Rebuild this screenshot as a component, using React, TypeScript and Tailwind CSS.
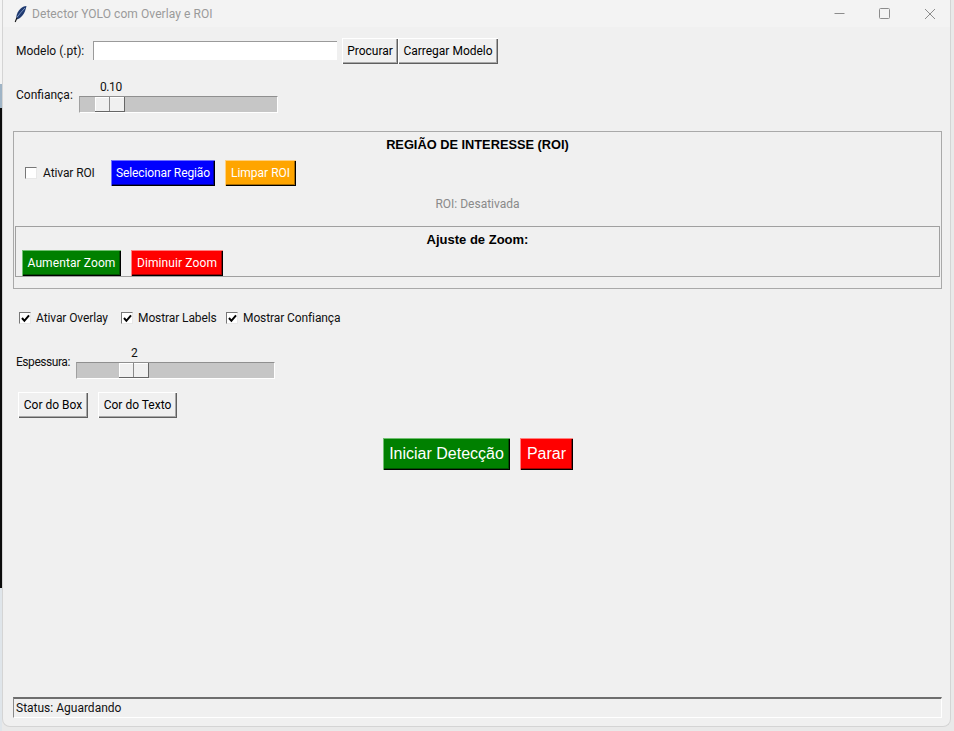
const raised = "shadow-[inset_1px_1px_0_#ffffff,inset_-1px_-1px_0_#5f5f5f,inset_-2px_-2px_0_#a8a8a8]";
const font = "font-['Roboto',sans-serif]";

function TkButton({ label, className = "" }: { label: string; className?: string }) {
  return (
    <button className={`flex h-[26px] items-center justify-center bg-[#f0f0f0] text-[12px] text-black ${raised} ${className}`}>
      {label}
    </button>
  );
}

function ColorButton({ label, className }: { label: string; className: string }) {
  return (
    <button className={`flex items-center justify-center text-white ${className}`}>
      {label}
    </button>
  );
}

function Check({ label, checked, className = "", labelClass = "ml-[6px]" }: { label: string; checked: boolean; className?: string; labelClass?: string }) {
  return (
    <div className={`flex items-center ${className}`}>
      <span className="flex h-[12px] w-[12px] items-center justify-center border border-t-[#777] border-l-[#777] border-r-[#e8e8e8] border-b-[#e8e8e8] bg-white">
        {checked && (
          <svg width="9" height="9" viewBox="0 0 9 9">
            <path d="M1 4 L3.4 6.8 L8 1.4" fill="none" stroke="#000" strokeWidth="2" />
          </svg>
        )}
      </span>
      <span className={`text-[12px] leading-none tracking-[-0.1px] text-[#111] ${labelClass}`}>{label}</span>
    </div>
  );
}

function Slider({ value, thumbOffset, valueOffset }: { value: string; thumbOffset: string; valueOffset: string }) {
  return (
    <div className="w-[199px]">
      <div className={`h-[18px] text-[12px] leading-[18px] tracking-[-0.4px] text-[#111] ${valueOffset}`}>{value}</div>
      <div className="h-[17px] border border-t-[#8f8f8f] border-l-[#a0a0a0] border-r-white border-b-white bg-[#c6c6c6]">
        <div className={`flex h-[15px] w-[30px] border-r border-b border-r-[#666] border-b-[#666] bg-[#f0f0f0] shadow-[inset_1px_1px_0_#ffffff] ${thumbOffset}`}>
          <div className="w-[15px] border-r border-[#8a8a8a]" />
        </div>
      </div>
    </div>
  );
}

export default function App() {
  return (
    <div className={`flex h-[731px] w-[954px] overflow-hidden bg-[#e9e9e9] ${font}`}>
      <div className="flex w-[2px] flex-col">
        <div className="h-[84px] bg-[#f4f4f4]" />
        <div className="h-[24px] bg-[#9fb4c6]" />
        <div className="h-[480px] bg-[#0c0c0c]" />
        <div className="flex-1 bg-[#dfe5ea]" />
      </div>
      <div className="flex h-[727px] w-[949px] flex-col rounded-b-[8px] border-l border-r border-b border-[#d4d4d4] bg-[#f0f0f0]">
        {/* title bar */}
        <div className="flex h-[27px] shrink-0 items-center bg-[#f3f3f3] pl-[11px] pr-[14px]">
          <svg width="14" height="18" viewBox="0 0 14 18">
            <path d="M12.5 1 C8 1 3.5 5.5 2.3 11.5 L2.6 14.5 C6.5 14 11 9 12.5 1 Z" fill="#1f3a70" />
            <path d="M11 3 C8 6 5 9.5 2.4 13" stroke="#8fa9d6" strokeWidth="0.8" fill="none" />
            <path d="M3 12.5 L1.2 17" stroke="#111" strokeWidth="1.1" fill="none" />
          </svg>
          <span className="ml-[4px] text-[12px] tracking-[0.07px] text-[#9a9a9a]">Detector YOLO com Overlay e ROI</span>
          <div className="ml-auto flex items-center gap-[34px]">
            <svg width="11" height="11" viewBox="0 0 11 11"><path d="M0.5 5.5 H10.5" stroke="#8c8c8c" strokeWidth="1" /></svg>
            <svg width="11" height="11" viewBox="0 0 11 11"><rect x="0.5" y="0.5" width="10" height="10" rx="1" fill="none" stroke="#8c8c8c" strokeWidth="1" /></svg>
            <svg width="12" height="12" viewBox="0 0 12 12"><path d="M1 1 L11 11 M11 1 L1 11" stroke="#8c8c8c" strokeWidth="1" /></svg>
          </div>
        </div>

        {/* model row */}
        <div className="mt-[11px] flex items-start pl-[13px]">
          <span className="mt-[7px] w-[77px] text-[12px] leading-none text-[#111]">Modelo (.pt):</span>
          <div className="mt-[3px] h-[19px] w-[244px] border-t border-l border-t-[#9a9a9a] border-l-[#9a9a9a] bg-white" />
          <TkButton label="Procurar" className="ml-[5px] w-[56px]" />
          <TkButton label="Carregar Modelo" className="w-[100px]" />
        </div>

        {/* confidence row */}
        <div className="mt-[14px] flex pl-[13px]">
          <span className="mt-[11px] w-[63px] text-[12px] leading-none text-[#111]">Confiança:</span>
          <Slider value="0.10" thumbOffset="ml-[15px]" valueOffset="pl-[21px]" />
        </div>

        {/* ROI frame */}
        <div className="mx-[10px] mt-[18px] h-[158px] w-[929px] border border-[#a9a9a9] px-[1px]">
          <div className="mt-[3px] text-center font-['Liberation_Sans',sans-serif] text-[12.8px] leading-[20px] font-bold text-black">REGIÃO DE INTERESSE (ROI)</div>
          <div className="mt-[5px] flex items-center pl-[10px]">
            <Check label="Ativar ROI" checked={false} className="w-[86px]" />
            <ColorButton label="Selecionar Região" className="h-[26px] w-[104px] bg-[#0000ff] text-[12px] tracking-[-0.1px] shadow-[inset_1px_1px_0_#7070ff,inset_-1px_-1px_0_#000,inset_-2px_-2px_0_#0000a0]" />
            <ColorButton label="Limpar ROI" className="ml-[10px] h-[26px] w-[71px] bg-[#ffa500] text-[12px] shadow-[inset_1px_1px_0_#ffd080,inset_-1px_-1px_0_#000,inset_-2px_-2px_0_#a86c00]" />
          </div>
          <div className="mt-[10px] text-center text-[12px] leading-[16px] text-[#8a8a8a]">ROI: Desativada</div>
          <div className="mt-[14px] h-[51px] border border-[#a0a0a0]">
            <div className="mt-[4px] text-center font-['Liberation_Sans',sans-serif] text-[13px] leading-[18px] font-bold text-black">Ajuste de Zoom:</div>
            <div className="mt-[1px] flex pl-[6px]">
              <ColorButton label="Aumentar Zoom" className="h-[26px] w-[99px] bg-[#008000] text-[12px] tracking-[0.1px] shadow-[inset_1px_1px_0_#70c070,inset_-1px_-1px_0_#000,inset_-2px_-2px_0_#005000]" />
              <ColorButton label="Diminuir Zoom" className="ml-[10px] h-[26px] w-[92px] bg-[#ff0000] text-[12px] tracking-[0.1px] shadow-[inset_1px_1px_0_#ff8080,inset_-1px_-1px_0_#000,inset_-2px_-2px_0_#a00000]" />
            </div>
          </div>
        </div>

        {/* overlay checks */}
        <div className="mt-[23px] flex h-[12px] items-center pl-[16px]">
          <Check label="Ativar Overlay" checked className="w-[102px]" labelClass="ml-[5px]" />
          <Check label="Mostrar Labels" checked className="w-[105px]" labelClass="ml-[5px]" />
          <Check label="Mostrar Confiança" checked labelClass="ml-[5px]" />
        </div>

        {/* thickness */}
        <div className="mt-[20px] flex pl-[13px]">
          <span className="mt-[12px] w-[60px] text-[12px] leading-none tracking-[-0.45px] text-[#111]">Espessura:</span>
          <Slider value="2" thumbOffset="ml-[42px]" valueOffset="pl-[55px]" />
        </div>

        <div className="mt-[13px] flex pl-[15px]">
          <TkButton label="Cor do Box" className="w-[70px]" />
          <TkButton label="Cor do Texto" className="ml-[10px] w-[79px]" />
        </div>

        {/* start/stop */}
        <div className="mt-[20px] flex justify-center gap-[10px] pl-[3px] font-['Liberation_Sans',sans-serif] text-[16px]">
          <ColorButton label="Iniciar Detecção" className="h-[32px] w-[127px] bg-[#008000] shadow-[inset_1px_1px_0_#70c070,inset_-1px_-1px_0_#000,inset_-2px_-2px_0_#005000]" />
          <ColorButton label="Parar" className="h-[32px] w-[53px] bg-[#ff0000] shadow-[inset_1px_1px_0_#ff8080,inset_-1px_-1px_0_#000,inset_-2px_-2px_0_#a00000]" />
        </div>

        {/* status */}
        <div className="mx-[10px] mt-auto mb-[8px] flex h-[21px] w-[929px] items-center border-t-2 border-l border-r border-b border-t-[#6e6e6e] border-l-[#8a8a8a] border-r-white border-b-white pl-[2px] text-[12px] text-[#111]">
          Status: Aguardando
        </div>
      </div>
    </div>
  );
}
